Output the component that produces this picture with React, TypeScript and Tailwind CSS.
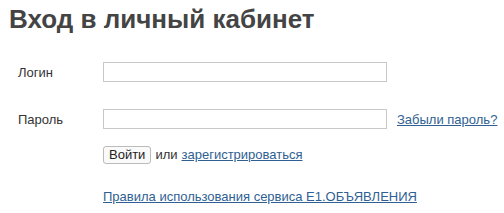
export default function App() {
  return (
    <div className="w-[504px] h-[213px] bg-white font-['Liberation_Sans',Arial,sans-serif] text-[13px] text-[#333]">
      <h1 className="pl-[9px] pt-[4px] text-[26px] leading-[30px] font-bold text-[#444]">
        Вход в личный кабинет
      </h1>
      <div className="flex flex-col pl-[18px] pt-[28px]">
        <div className="flex items-center h-[20px]">
          <label className="w-[85px] pt-[2px]">Логин</label>
          <input type="text" className="w-[284px] h-[20px] border border-[#c8c8c8] outline-none" />
        </div>
        <div className="flex items-center h-[20px] mt-[27px]">
          <label className="w-[85px] pt-[2px]">Пароль</label>
          <input type="password" className="w-[284px] h-[20px] border border-[#c8c8c8] outline-none" />
          <a href="#" className="ml-[10px] pt-[2px] text-[#2f5f93] underline">
            Забыли пароль?
          </a>
        </div>
        <div className="flex items-center pl-[85px] mt-[16px]">
          <button className="h-[18px] px-[5px] border border-[#bbb] rounded-[3px] bg-[#fafafa] text-[13px] leading-none text-[#222]">
            Войти
          </button>
          <span className="ml-[4px]">или</span>
          <a href="#" className="ml-[4px] text-[#2f5f93] underline">
            зарегистрироваться
          </a>
        </div>
        <div className="pl-[85px] mt-[22px]">
          <a href="#" className="text-[#2f5f93] underline">
            Правила использования сервиса E1.ОБЪЯВЛЕНИЯ
          </a>
        </div>
      </div>
    </div>
  );
}
